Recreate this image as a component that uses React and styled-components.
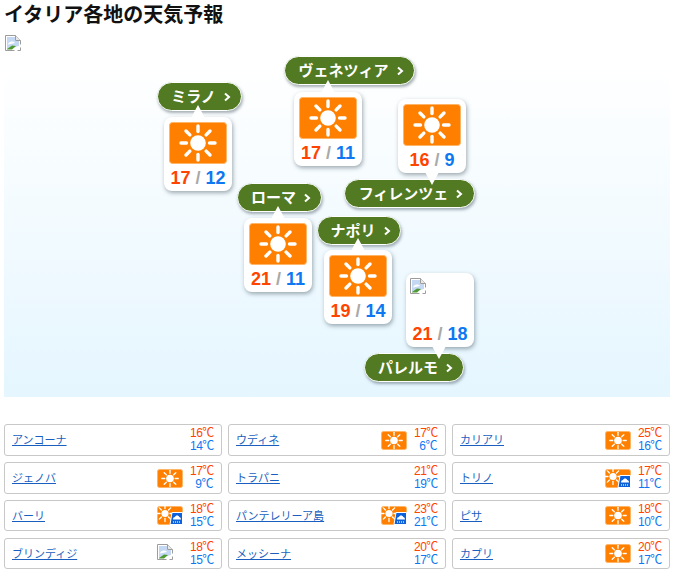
import React from 'react';
import styled, { createGlobalStyle } from 'styled-components';

const Global = createGlobalStyle`
  html, body { margin: 0; padding: 0; background: #fff; }
  body { font-family: "Liberation Sans", Arial, "Noto Sans CJK JP", sans-serif; }
`;
const Page = styled.div`
  width: 666px;
  padding: 0 4px;
  height: 576px;
  overflow: hidden;
`;
const Title = styled.h1`
  margin: 0;
  padding-top: 2px;
  height: 31px;
  font-size: 20px;
  line-height: 26px;
  font-weight: 700;
  color: #111;
`;
const MapPanel = styled.div`
  position: relative;
  height: 364px;
  margin-bottom: 27px;
  background: linear-gradient(to bottom, #ffffff 8%, #e5f6ff 100%);
`;
const Broken = styled.svg`
  display: block;
  width: 16px;
  height: 16px;
  flex: none;
`;
const MapBroken = styled(Broken)`
  position: relative;
  top: 2px;
  left: 1px;
`;
const CardBroken = styled(Broken)`
  margin-left: -1px;
`;
const Pin = styled.div`
  position: absolute;
  left: ${p => p.$x}px;
  top: ${p => p.$y}px;
  z-index: 3;
`;
const Label = styled.a`
  position: absolute;
  left: ${p => p.$x}px;
  top: ${p => p.$y}px;
  width: ${p => p.$w}px;
  height: 29px;
  box-sizing: border-box;
  padding-left: 4px;
  border: 1px solid #fff;
  border-radius: 14.5px;
  background: #527a23;
  box-shadow: 1px 2px 3px rgba(60, 80, 90, .45);
  color: #fff;
  font-size: 15px;
  font-weight: 700;
  line-height: 27px;
  text-align: center;
  white-space: nowrap;
  z-index: 2;
`;
const Chevron = styled.svg`
  width: 9px;
  height: 10px;
  margin-left: 7px;
`;
const Card = styled.div`
  position: relative;
  width: 68px;
  height: 74px;
  box-sizing: border-box;
  padding: 5px 5px 0;
  border-radius: 8px;
  background: #fff;
  box-shadow: 1px 2px 4px rgba(70, 90, 100, .5);
`;
const CardTip = styled.div`
  position: absolute;
  left: ${p => p.$x}px;
  ${p => (p.$up
    ? 'top: -12px; border-bottom: 13px solid #fff;'
    : 'bottom: -12px; border-top: 13px solid #fff;')}
  border-left: 7px solid transparent;
  border-right: 7px solid transparent;
`;
const Slot = styled.div`
  height: 42px;
`;
const Temps = styled.div`
  margin-top: 3px;
  text-align: center;
  font-size: 18px;
  line-height: 22px;
  font-weight: 700;
  white-space: nowrap;
`;
const High = styled.span`color: #ff4400;`;
const Low = styled.span`color: #0d78f2;`;
const Sep = styled.span`
  color: #a9a9a9;
  margin: 0 5px;
`;
const Grid = styled.div`
  display: grid;
  grid-template-columns: repeat(3, 218px);
  column-gap: 6px;
  grid-auto-rows: 32px;
  row-gap: 6px;
`;
const Row = styled.div`
  display: flex;
  align-items: center;
  box-sizing: border-box;
  height: ${p => (p.$short ? 31 : 32)}px;
  padding: 0 8px 0 7px;
  border: 1px solid #c8c8c8;
  border-radius: 3px;
  background: #fff;
`;
const City = styled.a`
  flex: 1;
  font-size: 11px;
  line-height: 14px;
  color: #1a5fc0;
  text-decoration: underline;
  white-space: nowrap;
`;
const IconSlot = styled.div`
  width: 26px;
  height: 19px;
  margin-right: 7px;
  flex: none;
`;
const Small = styled.div`
  width: 23px;
  flex: none;
  font-size: 12px;
  line-height: 13px;
  font-weight: 400;
  text-align: right;
  letter-spacing: -.5px;
`;
const SmallHigh = styled.div`color: #ff4400;`;
const SmallLow = styled.div`color: #0d78f2;`;
const IconSvg = styled.svg`
  display: block;
`;

const BrokenIcon = ({ as: C = Broken }) => (
  <C viewBox="0 0 16 16">
    <path d="M.5.5h10l5 5v10H.5z" fill="#fff" stroke="#9c9c9c" />
    <path d="M10.5.5v5h5" fill="#e8e8e8" stroke="#9c9c9c" />
    <path d="M2 2h8v4h4v5L2 14z" fill="#c4d8f4" />
    <path d="M3 9c2-3 5-3 7-1L3 9.5z" fill="#fff" />
    <path d="M2 14l5-3.5 4 .5-4 3.5H2z" fill="#4f9a33" />
    <path d="M9 16l7-7v3l-4 4z" fill="#fff" />
  </C>
);

const rays = [0, 45, 90, 135, 180, 225, 270, 315];

const BigSun = () => (
  <IconSvg width="58" height="42" viewBox="0 0 58 42">
    <rect x=".5" y=".5" width="57" height="41" rx="3" fill="#ff8000" stroke="#ffb566" />
    <circle cx="29" cy="21" r="7.8" fill="#fff" />
    {rays.map(a => (
      <line key={a} x1="29" y1="9.5" x2="29" y2="4" stroke="#fff" strokeWidth="3.4" strokeLinecap="round" transform={`rotate(${a} 29 21)`} />
    ))}
  </IconSvg>
);

const SmallSun = ({ cx = 13, cy = 9.5, r = 3.8 }) => (
  <>
    <circle cx={cx} cy={cy} r={r} fill="#fff" />
    {rays.map(a => (
      <line key={a} x1={cx} y1={cy - r - 1.4} x2={cx} y2={cy - r - 4.4} stroke="#fff" strokeWidth="1.3" strokeLinecap="round" transform={`rotate(${a} ${cx} ${cy})`} />
    ))}
  </>
);

const SunIcon = () => (
  <IconSvg width="26" height="19" viewBox="0 0 26 19">
    <rect x=".5" y=".5" width="25" height="18" rx="2" fill="#ff8000" stroke="#ffb566" />
    <SmallSun />
  </IconSvg>
);

const RainIcon = () => (
  <IconSvg width="26" height="19" viewBox="0 0 26 19">
    <rect x=".5" y=".5" width="25" height="18" rx="2" fill="#ff8000" stroke="#ffb566" />
    <SmallSun cx={8} cy={7.5} r={3.6} />
    <path d="M15 6.5H25.5V18.5H13z" fill="#0d62dc" stroke="#fff" strokeWidth="1" />
    <path d="M16 13.5c0-1.8 1-2.5 2-2.5.6-2 3.6-2 4.2 0 1 0 1.8.9 1.8 2.5z" fill="#fff" />
    <path d="M16 16h1M18 16h1M20 16h1M22 16h1" stroke="#cfe2ff" strokeWidth="1.4" />
  </IconSvg>
);

const pins = [
  { x: 160, y: 84, temp: [17, 12], tip: 27, up: true, icon: 'sun' },
  { x: 290, y: 59, temp: [17, 11], tip: 27, up: true, icon: 'sun' },
  { x: 394, y: 66, temp: [16, 9], tip: 27, up: false, icon: 'sun' },
  { x: 240, y: 185, temp: [21, 11], tip: 27, up: true, icon: 'sun' },
  { x: 320, y: 217, temp: [19, 14], tip: 27, up: true, icon: 'sun' },
  { x: 402, y: 240, temp: [21, 18], tip: 26, up: false, icon: 'none' },
];
const labels = [
  { x: 153, y: 49, w: 85, name: 'ミラノ' },
  { x: 280, y: 23, w: 131, name: 'ヴェネツィア' },
  { x: 340, y: 146, w: 131, name: 'フィレンツェ' },
  { x: 233, y: 150, w: 85, name: 'ローマ' },
  { x: 313, y: 183, w: 84, name: 'ナポリ' },
  { x: 360, y: 320, w: 100, name: 'パレルモ' },
];

const rows = [
  ['アンコーナ', null, 16, 14], ['ウディネ', 'sun', 17, 6], ['カリアリ', 'sun', 25, 16],
  ['ジェノバ', 'sun', 17, 9], ['トラパニ', null, 21, 19], ['トリノ', 'rain', 17, 11],
  ['バーリ', 'rain', 18, 15], ['パンテレリーア島', 'rain', 23, 21], ['ピサ', 'sun', 18, 10],
  ['ブリンディジ', 'broken', 18, 15], ['メッシーナ', null, 20, 17], ['カプリ', 'sun', 20, 17],
];

export default function App() {
  return (
    <Page>
      <Global />
      <Title>イタリア各地の天気予報</Title>
      <MapPanel>
        <BrokenIcon as={MapBroken} />
        {pins.map((p, i) => (
          <Pin key={i} $x={p.x} $y={p.y}>
            <Card>
              <CardTip $x={p.tip} $up={p.up} />
              <Slot>{p.icon === 'sun' ? <BigSun /> : <BrokenIcon as={CardBroken} />}</Slot>
              <Temps>
                <High>{p.temp[0]}</High>
                <Sep>/</Sep>
                <Low>{p.temp[1]}</Low>
              </Temps>
            </Card>
          </Pin>
        ))}
        {labels.map(l => (
          <Label key={l.name} $x={l.x} $y={l.y} $w={l.w}>
            {l.name}
            <Chevron viewBox="0 0 9 10">
              <path d="M2 1.5L6 5 2 8.5" fill="none" stroke="#fff" strokeWidth="2" />
            </Chevron>
          </Label>
        ))}
      </MapPanel>
      <Grid>
        {rows.map((r, i) => (
          <Row key={r[0]} $short={i >= 6}>
            <City>{r[0]}</City>
            <IconSlot>
              {r[1] === 'sun' && <SunIcon />}
              {r[1] === 'rain' && <RainIcon />}
              {r[1] === 'broken' && <BrokenIcon />}
            </IconSlot>
            <Small>
              <SmallHigh>{r[2]}℃</SmallHigh>
              <SmallLow>{r[3]}℃</SmallLow>
            </Small>
          </Row>
        ))}
      </Grid>
    </Page>
  );
}
